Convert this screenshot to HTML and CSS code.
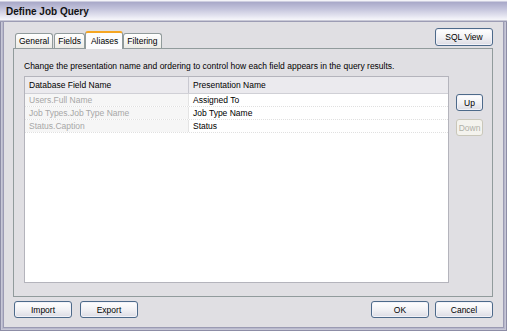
FILE: index.html
```html
<!DOCTYPE html>
<html>
<head>
<meta charset="utf-8">
<link rel="stylesheet" href="styles.css">
</head>
<body>
<div class="window">
  <div class="titlebar"><span class="title">Define Job Query</span></div>
  <div class="content">
    <div class="toprow">
      <div class="tabs">
        <div class="tab">General</div>
        <div class="tab">Fields</div>
        <div class="tab active">Aliases</div>
        <div class="tab">Filtering</div>
      </div>
      <button class="btn sql">SQL View</button>
    </div>
    <div class="panel">
      <div class="desc">Change the presentation name and ordering to control how each field appears in the query results.</div>
      <div class="panel-body">
        <div class="grid">
          <div class="grid-head">
            <div class="hcell c1">Database Field Name</div>
            <div class="hcell c2">Presentation Name</div>
          </div>
          <div class="grid-row">
            <div class="cell c1 ro">Users.Full Name</div>
            <div class="cell c2">Assigned To</div>
          </div>
          <div class="grid-row">
            <div class="cell c1 ro">Job Types.Job Type Name</div>
            <div class="cell c2">Job Type Name</div>
          </div>
          <div class="grid-row">
            <div class="cell c1 ro">Status.Caption</div>
            <div class="cell c2">Status</div>
          </div>
        </div>
        <div class="side">
          <button class="btn small">Up</button>
          <button class="btn small disabled">Down</button>
        </div>
      </div>
    </div>
    <div class="bottomrow">
      <div class="group">
        <button class="btn wide">Import</button>
        <button class="btn wide">Export</button>
      </div>
      <div class="group right">
        <button class="btn wide">OK</button>
        <button class="btn wide">Cancel</button>
      </div>
    </div>
  </div>
</div>
</body>
</html>
```
FILE: styles.css
```css
* { box-sizing: border-box; }
html, body { margin: 0; padding: 0; background: #fff; }
body { font-family: "Liberation Sans", Arial, sans-serif; font-size: 8.5px; color: #000; }

.window {
  width: 507px;
  height: 331px;
  background: #e0dfe3;
  border: 1px solid #8d8da6;
  border-top: none;
  box-shadow: inset 1px 0 #c7c7d6, inset -1px 0 #c7c7d6, inset 0 -1px #c7c7d6, inset 2px 0 #b8b8cc, inset -2px 0 #b8b8cc, inset 0 -2px #b8b8cc, inset 3px 0 #9b9bb3, inset -3px 0 #9b9bb3, inset 0 -3px #9b9bb3;
  display: flex;
  flex-direction: column;
}

.titlebar {
  height: 22px;
  margin: 0 -1px;
  background: linear-gradient(to bottom, #f4f4f8 0px, #f4f4f8 1px, #a8a8c8 2px, #c4c4dc 9px, #eeeef6 18px, #f6f6fa 20px, #9c9cb4 21px, #9c9cb4 22px);
  display: flex;
  align-items: center;
  padding-left: 6px;
  padding-top: 1px;
}
.title { font-weight: bold; font-size: 10px; color: #111; }

.content {
  flex: 1;
  padding: 6px 13px 0 12px;
  display: flex;
  flex-direction: column;
}

.toprow {
  height: 20px;
  display: flex;
  justify-content: space-between;
  align-items: flex-start;
}
.tabs {
  display: flex;
  align-items: flex-end;
  align-self: flex-end;
  padding-left: 2px;
  position: relative;
  z-index: 1;
}
.tab {
  height: 15px;
  padding: 2px 3px 0 3px;
  margin-right: 1px;
  border: 1px solid #919b9c;
  border-bottom: none;
  border-radius: 3px 3px 0 0;
  background: linear-gradient(to bottom, #ffffff, #ecebe6);
  font-size: 8.5px;
  line-height: 11px;
}
.tab.active {
  padding-top: 3px;
  margin: 0 0 -1px -1px;
  padding-left: 5px;
  padding-right: 4px;
  background: #fcfcfe;
  border-top: 2px solid #f5a623;
  height: 18px;
}

.btn {
  font-family: "Liberation Sans", Arial, sans-serif;
  font-size: 8.5px;
  color: #000;
  border: 1px solid #4d6a8a;
  border-radius: 3px;
  background: linear-gradient(to bottom, #ffffff 0%, #f2f2f5 50%, #dcdce4 100%);
  box-shadow: inset 0 0 0 1px #f2f2f8;
  padding: 0;
  margin: 0;
}
.sql { width: 58px; height: 18px; }

.panel {
  height: 249px;
  border: 1px solid #919b9c;
  background: #e0dfe3;
  display: flex;
  flex-direction: column;
  padding: 10px 9px 13px 10px;
}
.desc { height: 17px; line-height: 14px; color: #000; }
.panel-body { flex: 1; display: flex; gap: 7px; }

.grid {
  width: 425px;
  background: #fff;
  border: 1px solid #b4b4bc;
  display: flex;
  flex-direction: column;
}
.grid-head { display: flex; height: 17px; background: #ebeaee; border-bottom: 1px solid #d0d0d6; }
.hcell { line-height: 16px; padding-left: 4px; color: #000; }
.hcell.c1 { border-right: 1px solid #c8c8d0; }
.c1 { width: 164px; }
.c2 { flex: 1; }
.grid-row { display: flex; height: 13px; border-bottom: 1px dotted #e0e0e0; }
.cell { line-height: 12px; padding-left: 4px; }
.cell.c1 { background: #f6f6f6; border-right: 1px solid #e4e4e4; }
.cell.ro { color: #a7a7a7; }

.side { display: flex; flex-direction: column; gap: 8px; padding-top: 18px; }
.small { width: 27px; height: 17px; }
.btn.disabled { color: #b0b0a8; border-color: #c9c7ba; background: #f4f3ee; box-shadow: none; }

.bottomrow {
  display: flex;
  justify-content: space-between;
  padding-top: 4px;
  padding-left: 1px;
}
.group { display: flex; gap: 8px; }
.group.right { gap: 6px; }
.wide { width: 58px; height: 17px; }
```
